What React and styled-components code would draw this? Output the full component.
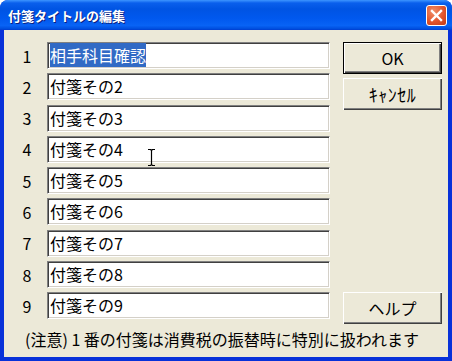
import React from 'react';
import styled, { createGlobalStyle } from 'styled-components';

const GlobalStyle = createGlobalStyle`
  html, body {
    margin: 0;
    padding: 0;
    background: #ffffff;
  }
  body {
    font-family: "Noto Sans CJK JP", "Liberation Sans", sans-serif;
  }
`;

const titles = [
  '相手科目確認',
  '付箋その2',
  '付箋その3',
  '付箋その4',
  '付箋その5',
  '付箋その6',
  '付箋その7',
  '付箋その8',
  '付箋その9',
];

const App = () => {
  return (
    <>
      <GlobalStyle />
      <Window>
        <TitleBar>
          <Title>付箋タイトルの編集</Title>
          <CloseButton>
            <svg width="13" height="13" viewBox="0 0 13 13">
              <path
                d="M2 2 L11 11 M11 2 L2 11"
                stroke="#ffffff"
                strokeWidth="2.4"
                strokeLinecap="square"
              />
            </svg>
          </CloseButton>
        </TitleBar>
        <Body>
          <Form>
            {titles.map((title, i) => (
              <React.Fragment key={i}>
                <RowNumber row={i + 1}>{i + 1}</RowNumber>
                <EditBox row={i + 1}>
                  {i === 0 ? <Selected>{title}</Selected> : title}
                </EditBox>
              </React.Fragment>
            ))}
            <Button row={1} $default>
              OK
            </Button>
            <Button row={2} $offset={5}>
              <Narrow>ｷｬﾝｾﾙ</Narrow>
            </Button>
            <Button row={9}>ヘルプ</Button>
          </Form>
          <Note>(注意) 1 番の付箋は消費税の振替時に特別に扱われます</Note>
          <Cursor width="9" height="17" viewBox="0 0 9 17">
            <path
              d="M1 0.5 H3.5 L4.5 1.5 L5.5 0.5 H8 M4.5 1.5 V15.5 M1 16.5 H3.5 L4.5 15.5 L5.5 16.5 H8"
              stroke="#000"
              strokeWidth="1.2"
              fill="none"
            />
          </Cursor>
        </Body>
      </Window>
    </>
  );
};

const Window = styled.div`
  position: relative;
  width: 452px;
  height: 361px;
  box-sizing: border-box;
  display: flex;
  flex-direction: column;
  background: #0831d9;
  border-radius: 8px 8px 0 0;
  overflow: hidden;
`;

const TitleBar = styled.div`
  height: 30px;
  flex: none;
  display: flex;
  align-items: center;
  justify-content: space-between;
  padding: 0 5px 0 8px;
  background: linear-gradient(
    to bottom,
    #3d95ff 0%,
    #0a5fec 10%,
    #0054e3 30%,
    #0058ee 60%,
    #0863f5 85%,
    #0050e0 95%,
    #003dd0 100%
  );
`;

const Title = styled.span`
  color: #ffffff;
  font-size: 13px;
  font-weight: bold;
  text-shadow: 1px 1px 0 #0a1f80;
`;

const CloseButton = styled.span`
  width: 19px;
  height: 19px;
  border: 1px solid #ffffff;
  border-radius: 3px;
  display: flex;
  align-items: center;
  justify-content: center;
  background: radial-gradient(circle at 35% 30%, #f0906a 0%, #e2542c 55%, #c13a16 100%);
`;

const Body = styled.div`
  flex: 1;
  margin: 0 4px 4px 4px;
  background: #ece9d8;
  padding: 12px 6px 0 10px;
  position: relative;
`;

const Form = styled.div`
  display: grid;
  grid-template-columns: 26px 283px 105px;
  grid-template-rows: repeat(9, 27px);
  column-gap: 7px;
  row-gap: 4.3px;
`;

const RowNumber = styled.span`
  grid-column: 1;
  grid-row: ${(p) => p.row};
  font-size: 16px;
  color: #000;
  display: flex;
  align-items: center;
  justify-content: center;
`;

const EditBox = styled.div`
  grid-column: 2;
  grid-row: ${(p) => p.row};
  background: #ffffff;
  box-sizing: border-box;
  border-top: 1px solid #808080;
  border-left: 1px solid #808080;
  border-bottom: 1px solid #ffffff;
  border-right: 1px solid #ffffff;
  box-shadow: inset 1px 1px 0 #404040, inset -1px -1px 0 #d4d0c8;
  padding: 0 2px;
  font-size: 16px;
  line-height: 25px;
  color: #000;
  white-space: nowrap;
  overflow: hidden;
`;

const Selected = styled.span`
  background: #316ac5;
  color: #ffffff;
`;

const Button = styled.div`
  grid-column: 3;
  grid-row: ${(p) => p.row};
  align-self: start;
  margin-top: ${(p) => p.$offset || 0}px;
  margin-left: 6px;
  height: 32px;
  box-sizing: border-box;
  display: flex;
  align-items: center;
  justify-content: center;
  background: #ece9d8;
  font-size: 16px;
  color: #000;
  border: ${(p) => (p.$default ? '1px solid #000' : '0')};
  box-shadow: inset 1px 1px 0 #ffffff, inset -1px -1px 0 #404040,
    inset -2px -2px 0 #808080;
`;

const Narrow = styled.span`
  font-size: 18px;
  letter-spacing: 0.5px;
`;

const Note = styled.div`
  margin-top: 8px;
  padding-left: 11px;
  font-size: 16px;
  color: #000;
  white-space: nowrap;
`;

const Cursor = styled.svg`
  position: absolute;
  left: 143px;
  top: 119px;
`;

export default App;
